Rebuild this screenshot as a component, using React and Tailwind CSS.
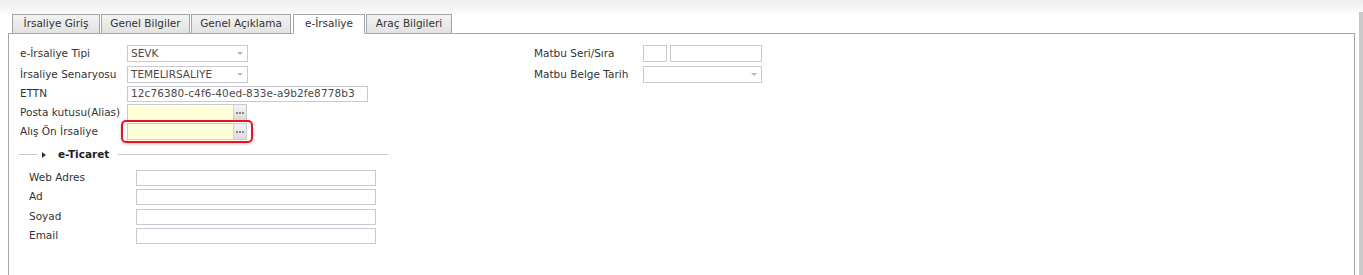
import React from 'react';

const font = { fontFamily: '"DejaVu Sans", Verdana, sans-serif' };

const tabs = [
  { label: 'İrsaliye Giriş', w: 'w-[88px]', ml: 'ml-0' },
  { label: 'Genel Bilgiler', w: 'w-[89px]', ml: 'ml-px' },
  { label: 'Genel Açıklama', w: 'w-[100px]', ml: 'ml-px' },
  { label: 'e-İrsaliye', w: 'w-[72px]', ml: 'ml-[2px]', active: true },
  { label: 'Araç Bilgileri', w: 'w-[86px]', ml: 'ml-px' },
];

const ticaret = [
  { label: 'Web Adres', mt: '' },
  { label: 'Ad', mt: 'mt-[3px]' },
  { label: 'Soyad', mt: 'mt-[4px]' },
  { label: 'Email', mt: 'mt-[3px]' },
];

function Arrow() {
  return (
    <span className="ml-auto mr-[4px] w-0 h-0 border-l-[3px] border-r-[3px] border-t-[3px] border-l-transparent border-r-transparent border-t-[#b8b8b8]" />
  );
}

function Select({ value, w }) {
  return (
    <div className={`${w} h-[17px] border border-[#c9c9d1] bg-white flex items-center pl-[3px] text-[#4a4a4a]`}>
      <span>{value}</span>
      <Arrow />
    </div>
  );
}

function Lookup() {
  return (
    <div className="w-[120px] h-[17px] border border-[#c9c9d1] bg-[#ffffd9] flex">
      <div className="flex-1" />
      <div className="w-[13px] h-full bg-gradient-to-b from-[#f4f4f4] to-[#dcdcdc] border-l border-[#d4d4d4] flex items-center justify-center gap-px">
        <span className="w-[2px] h-[2px] bg-[#888]" />
        <span className="w-[2px] h-[2px] bg-[#888]" />
        <span className="w-[2px] h-[2px] bg-[#888]" />
      </div>
    </div>
  );
}

function Row({ label, children, mt }) {
  return (
    <div className={`flex items-center ${mt}`}>
      <div className="w-[107px] text-[#333]">{label}</div>
      {children}
    </div>
  );
}

export default function App() {
  return (
    <div style={font} className="relative w-[1363px] h-[275px] overflow-hidden bg-white text-[10.5px] text-[#333]">
      <div className="h-[14px] bg-gradient-to-b from-[#efefef] to-[#fbfbfb]" />
      <div className="absolute right-0 top-[12px] w-[4px] h-[263px] bg-[#c9c9c9]" />

      <div className="flex pl-[12px] h-[20px] relative z-10">
        {tabs.map(t => (
          <div
            key={t.label}
            className={`${t.w} ${t.ml} border border-[#a4a4ae] flex items-center justify-center ${
              t.active ? 'bg-white border-b-white h-[20px]' : 'bg-gradient-to-b from-[#f2f2f2] to-[#e2e2e2] h-[19px] border-b-0'
            }`}
          >
            {t.label}
          </div>
        ))}
      </div>

      <div className="ml-[8px] w-[1347px] h-[260px] border border-[#a4a4ae] -mt-px">
        <div className="flex pt-[11px]">
          <div className="pl-[11px] w-[525px]">
            <Row label="e-İrsaliye Tipi">
              <Select value="SEVK" w="w-[121px]" />
            </Row>
            <Row label="İrsaliye Senaryosu" mt="mt-[4px]">
              <Select value="TEMELIRSALIYE" w="w-[121px]" />
            </Row>
            <Row label="ETTN" mt="mt-[3px]">
              <div className="w-[241px] h-[16px] border border-[#c9c9d1] bg-white flex items-center pl-[3px] text-[#4a4a4a] tracking-[0.1px]">
                12c76380-c4f6-40ed-833e-a9b2fe8778b3
              </div>
            </Row>
            <Row label="Posta kutusu(Alias)" mt="mt-[2px]">
              <Lookup />
            </Row>
            <Row label="Alış Ön İrsaliye" mt="mt-[2px]">
              <div className="-ml-[6px] px-[4px] py-[1px] rounded-[5px] border-2 border-[#e8141b] shadow-[0_1px_3px_rgba(0,0,0,0.25)] -my-[3px]">
                <Lookup />
              </div>
            </Row>

            <div className="flex items-center mt-[7px] -ml-px">
              <div className="w-[18px] h-px bg-[#c8c8c8]" />
              <span className="ml-[5px] w-0 h-0 border-t-[3px] border-b-[3px] border-l-[4px] border-t-transparent border-b-transparent border-l-[#333]" />
              <span className="ml-[12px] font-bold text-[#222]">e-Ticaret</span>
              <div className="ml-[9px] w-[270px] h-px bg-[#c8c8c8]" />
            </div>

            <div className="pl-[9px] mt-[7px]">
              {ticaret.map(f => (
                <div key={f.label} className={`flex items-center ${f.mt}`}>
                  <div className="w-[107px]">{f.label}</div>
                  <div className="w-[240px] h-[16px] border border-[#c9c9d1] bg-white" />
                </div>
              ))}
            </div>
          </div>

          <div>
            <div className="flex items-center">
              <div className="w-[109px]">Matbu Seri/Sıra</div>
              <div className="w-[24px] h-[17px] border border-[#c9c9d1]" />
              <div className="ml-[3px] w-[92px] h-[17px] border border-[#c9c9d1]" />
            </div>
            <div className="flex items-center mt-[4px]">
              <div className="w-[109px]">Matbu Belge Tarih</div>
              <Select value="" w="w-[119px]" />
            </div>
          </div>
        </div>
      </div>
    </div>
  );
}
